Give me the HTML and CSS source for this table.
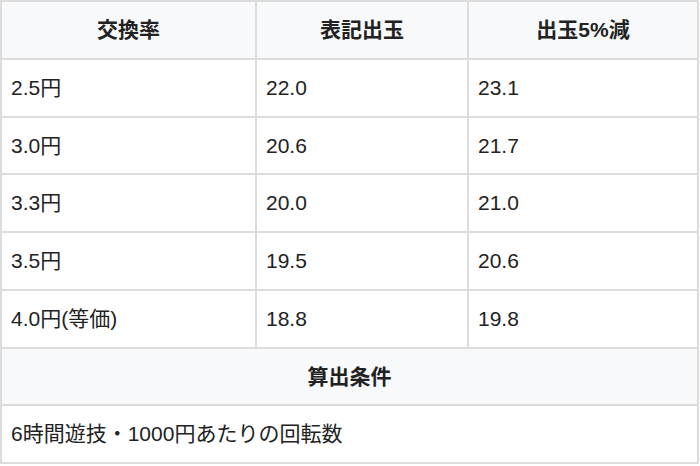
FILE: index.html
```html
<!DOCTYPE html>
<html lang="ja">
<head>
<meta charset="utf-8">
<link rel="stylesheet" href="styles.css">
</head>
<body>
<table class="rate-table">
  <colgroup>
    <col class="c1">
    <col class="c2">
    <col class="c3">
  </colgroup>
  <thead>
    <tr>
      <th>交換率</th>
      <th>表記出玉</th>
      <th>出玉5%減</th>
    </tr>
  </thead>
  <tbody>
    <tr><td>2.5円</td><td>22.0</td><td>23.1</td></tr>
    <tr><td>3.0円</td><td>20.6</td><td>21.7</td></tr>
    <tr><td>3.3円</td><td>20.0</td><td>21.0</td></tr>
    <tr><td>3.5円</td><td>19.5</td><td>20.6</td></tr>
    <tr><td>4.0円(等価)</td><td>18.8</td><td>19.8</td></tr>
    <tr><th colspan="3">算出条件</th></tr>
    <tr><td colspan="3">6時間遊技・1000円あたりの回転数</td></tr>
  </tbody>
</table>
</body>
</html>
```

FILE: styles.css
```css
html, body {
  margin: 0;
  padding: 0;
  background: #ffffff;
}

body {
  font-family: "Liberation Sans", "Noto Sans CJK JP", sans-serif;
  color: #222222;
}

.rate-table {
  border-collapse: collapse;
  width: 697px;
  table-layout: fixed;
  margin: 0;
  font-size: 21px;
}

.c1 { width: 255px; }
.c2 { width: 212px; }
.c3 { width: 230px; }

.rate-table th,
.rate-table td {
  border: 2px solid #dcdcdc;
  padding: 12px 9px 12px 9px;
  line-height: 31.75px;
  vertical-align: middle;
}

.rate-table th {
  background: #f8f9fa;
  font-weight: bold;
  text-align: center;
}

.rate-table td {
  text-align: left;
  font-weight: normal;
}
```
